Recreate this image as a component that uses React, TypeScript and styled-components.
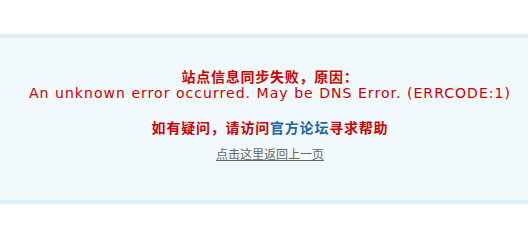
import React from 'react';
import styled, { createGlobalStyle } from 'styled-components';

const GlobalStyle = createGlobalStyle`
  html, body {
    margin: 0;
    padding: 0;
    background: #fff;
  }
  body {
    font-family: "DejaVu Sans", Verdana, "Noto Sans CJK SC", sans-serif;
    font-size: 12px;
    color: #333;
  }
`;

const Page = styled.div`
  padding-top: 34px;
`;

const InfoBox = styled.div`
  padding: 30px 0 30px 12px;
  text-align: center;
  border-top: 4px solid #deeffa;
  border-bottom: 4px solid #deeffa;
  background: #f2f9fd;
`;

const Title = styled.h4`
  margin: 0;
  color: #cc0000;
  font-size: 14px;
  line-height: 17px;
  font-weight: 700;
  letter-spacing: 0.75px;
  font-family: "Noto Sans CJK SC", sans-serif;
`;

const Reason = styled.span`
  display: block;
  font-weight: 400;
  letter-spacing: 1.04px;
  font-family: "DejaVu Sans", Verdana, sans-serif;
`;

const Help = styled.p`
  margin: 17px 0 0;
  color: #cc0000;
  font-size: 14px;
  line-height: 17px;
  font-weight: 700;
  letter-spacing: 0.8px;
  font-family: "Noto Sans CJK SC", sans-serif;
`;

const ForumLink = styled.a`
  color: #2366a8;
  text-decoration: none;
`;

const Back = styled.p`
  margin: 10px 0 8px;
  font-size: 12px;
  line-height: 16px;
  font-family: "Noto Sans CJK SC", sans-serif;
`;

const BackLink = styled.a`
  color: #666;
  text-decoration: underline;
`;

const App: React.FC = () => (
  <Page>
    <GlobalStyle />
    <InfoBox>
      <Title>
        站点信息同步失败，原因：
        <Reason>An unknown error occurred. May be DNS Error. (ERRCODE:1)</Reason>
      </Title>
      <Help>
        如有疑问，请访问<ForumLink href="#">官方论坛</ForumLink>寻求帮助
      </Help>
      <Back>
        <BackLink href="#">点击这里返回上一页</BackLink>
      </Back>
    </InfoBox>
  </Page>
);

export default App;
